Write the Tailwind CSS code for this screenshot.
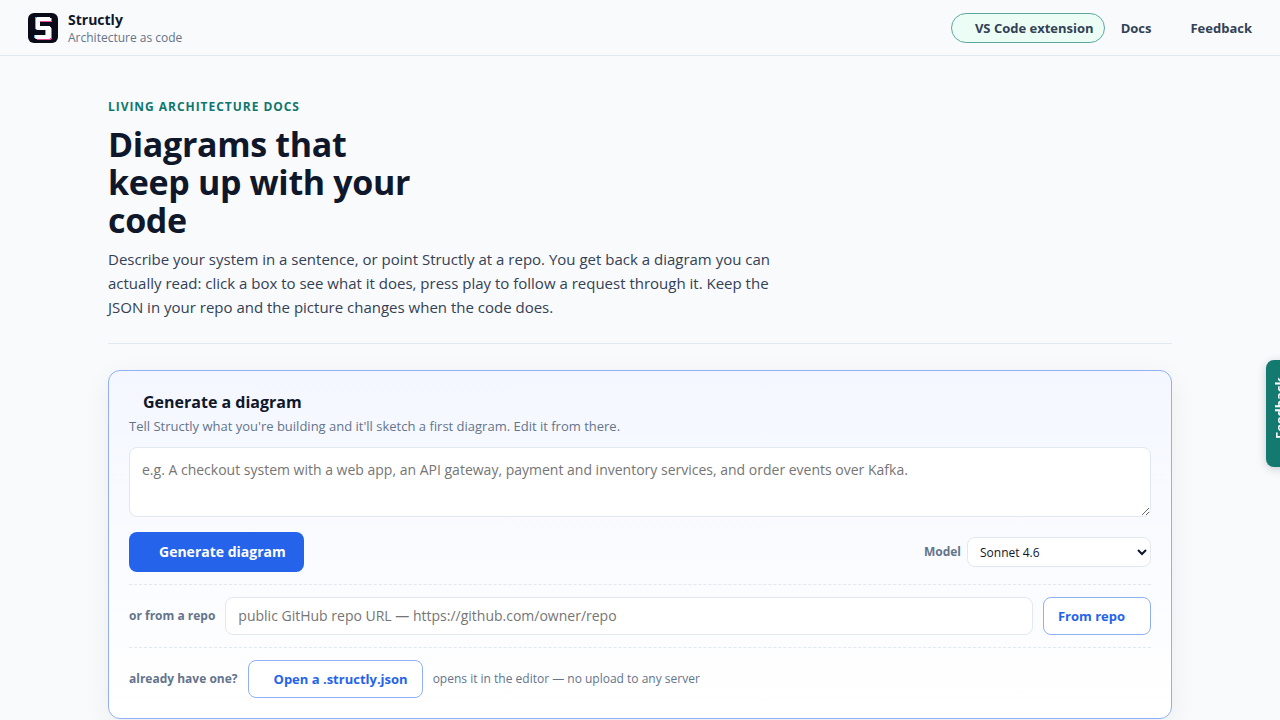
<!DOCTYPE html>
<html lang="en">
<head>
<meta charset="utf-8">
<meta name="viewport" content="width=device-width, initial-scale=1">
<title>Structly</title>
<script src="https://cdn.jsdelivr.net/npm/@tailwindcss/browser@4"></script>
</head>
<body class="min-h-screen overflow-x-hidden bg-[#f9fafc] font-['Open_Sans',sans-serif] text-[#0f172a]">
<header class="flex h-14 items-center justify-between border-b border-[#e2e8f0] px-7">
  <a href="#" class="flex items-center gap-2.5">
    <svg class="size-[30px]" viewBox="0 0 30 30" shape-rendering="crispEdges" aria-hidden="true">
      <rect width="30" height="30" rx="6" fill="#090c18" shape-rendering="auto"/>
      <path fill="#ec4899" d="M9 5h15v4H12v5h11v1h1v11h-1v1H9v-1H8v-3h11v-6h-9v-1H9z"/>
      <path fill="#60a5fa" d="M7 4h15v4H11v5h11v13H7v-1H6v-3h11v-5H8v-1H7z"/>
      <path fill="#fff" d="M9 4h13v1h1v3H12v5h10v1h1v11h-1v1H8v-1H7v-3h11v-5H9v-1H8V5h1z"/>
    </svg>
    <span class="flex flex-col pt-0.5">
      <span class="text-sm leading-[18px] font-bold">Structly</span>
      <span class="text-xs leading-[18px] text-[#64748b]">Architecture as code</span>
    </span>
  </a>
  <nav class="flex items-center text-[13px] leading-5 font-bold text-[#334155]">
    <a href="#" class="flex h-[30px] items-center rounded-full border border-[#5fa89f] bg-[#ecfdf5] pr-2.5 pl-[23px]">VS Code extension</a>
    <a href="#" class="ml-4">Docs</a>
    <a href="#" class="ml-[39px]">Feedback</a>
  </nav>
</header>

<main class="mx-auto max-w-[1112px] px-6 pt-[42px] pb-10">
  <section class="border-b border-[#e2e8f0] pb-6">
    <p class="text-xs leading-[18px] font-bold tracking-[0.08em] text-[#0f766e] uppercase">Living architecture docs</p>
    <h1 class="mt-[9px] max-w-[320px] text-[34px] leading-[38px] font-bold tracking-[-0.01em]">Diagrams that keep up with your code</h1>
    <p class="mt-2 max-w-[680px] text-[15px] leading-6 text-[#334155]">Describe your system in a sentence, or point Structly at a repo. You get back a diagram you can actually read: click a box to see what it does, press play to follow a request through it. Keep the JSON in your repo and the picture changes when the code does.</p>
  </section>

  <section class="mt-[26px] rounded-xl border border-[#8fb0f6] bg-linear-to-b from-[#f4f7ff] to-white p-5 shadow-[0_8px_28px_rgba(15,23,42,0.06)]">
    <h2 class="pl-3.5 text-base leading-[22px] font-bold">Generate a diagram</h2>
    <p class="mt-[3px] text-[13px] leading-5 text-[#64748b]">Tell Structly what you're building and it'll sketch a first diagram. Edit it from there.</p>
    <textarea aria-label="System description" class="mt-[11px] block h-[70px] w-full resize-y rounded-lg border border-[#e2e8f0] bg-white px-3 py-3 text-sm leading-5 placeholder:text-[#757575]" placeholder="e.g. A checkout system with a web app, an API gateway, payment and inventory services, and order events over Kafka."></textarea>
    <div class="mt-[15px] flex items-center justify-between">
      <button type="button" class="h-10 rounded-lg bg-[#2563eb] pr-[18px] pl-[30px] text-sm font-bold text-white">Generate diagram</button>
      <label class="flex items-center gap-1.5 text-xs font-bold text-[#64748b]">Model
        <select class="h-[30px] w-[184px] rounded-lg border border-[#e2e8f0] bg-white px-2 text-xs font-normal text-[#0f172a]"><option>Sonnet 4.6</option></select>
      </label>
    </div>
    <div class="mt-3 flex items-center gap-2.5 border-t border-dashed border-[#e2e8f0] pt-3">
      <label for="repo" class="text-xs font-bold text-[#64748b]">or from a repo</label>
      <input id="repo" type="url" class="h-[38px] min-w-0 flex-1 rounded-lg border border-[#e2e8f0] bg-white px-3 pb-0.5 text-sm placeholder:text-[#757575]" placeholder="public GitHub repo URL — https://github.com/owner/repo">
      <button type="button" class="h-[38px] rounded-lg border border-[#8fb0f6] bg-white pr-[25px] pl-3.5 text-[13px] leading-5 font-bold text-[#2563eb]">From repo</button>
    </div>
    <div class="mt-3 flex items-center gap-2.5 border-t border-dashed border-[#e2e8f0] pt-3">
      <span class="text-xs font-bold text-[#64748b]">already have one?</span>
      <button type="button" class="h-[38px] rounded-lg border border-[#8fb0f6] bg-white pr-3.5 pl-[25px] text-[13px] leading-5 font-bold text-[#2563eb]">Open a .structly.json</button>
      <span class="text-xs text-[#64748b]">opens it in the editor — no upload to any server</span>
    </div>
  </section>
</main>

<button type="button" class="fixed top-[360px] -right-3.5 flex h-[107px] w-7 rotate-180 items-center justify-start rounded-r-lg bg-[#147a70] pt-7 text-[13px] leading-5 font-bold text-white shadow-[0_-2px_10px_rgba(15,23,42,0.2)] [writing-mode:vertical-rl]">Feedback</button>
</body>
</html>
